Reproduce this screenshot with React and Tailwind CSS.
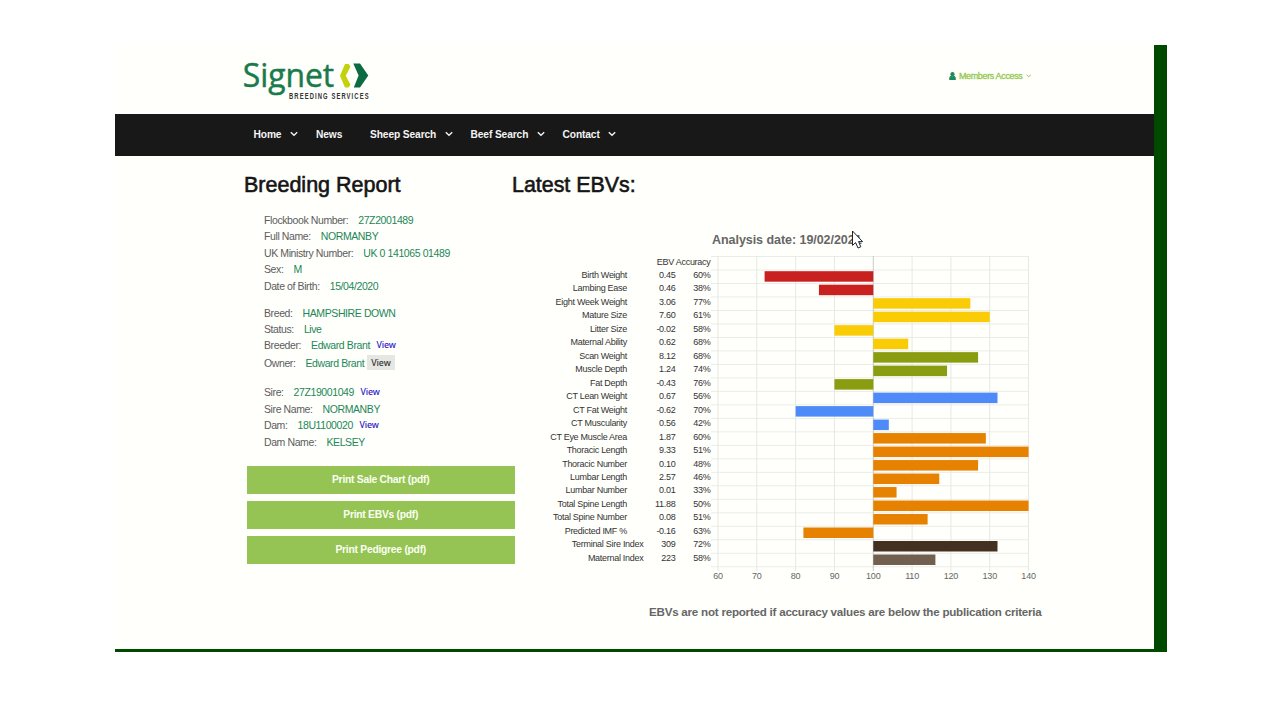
import React from "react";

const nav = [
  { label: "Home", cls: "ml-[138.5px] w-[62.5px]", arrow: true },
  { label: "News", cls: "w-[54px]", arrow: false },
  { label: "Sheep Search", cls: "w-[100.5px]", arrow: true },
  { label: "Beef Search", cls: "w-[92px]", arrow: true },
  { label: "Contact", cls: "", arrow: true },
];

const details = [
  { label: "Flockbook Number:", value: "27Z2001489", h: "h-[16px]" },
  { label: "Full Name:", value: "NORMANBY", h: "h-[16.5px]" },
  { label: "UK Ministry Number:", value: "UK 0 141065 01489", h: "h-[16.5px]" },
  { label: "Sex:", value: "M", h: "h-[17px]" },
  { label: "Date of Birth:", value: "15/04/2020", h: "h-[26.5px]" },
  { label: "Breed:", value: "HAMPSHIRE DOWN", h: "h-[16px]" },
  { label: "Status:", value: "Live", h: "h-[16.5px]" },
  { label: "Breeder:", value: "Edward Brant", h: "h-[18px]", link: "view" },
  { label: "Owner:", value: "Edward Brant", h: "h-[28.5px]", link: "active" },
  { label: "Sire:", value: "27Z19001049", h: "h-[17.5px]", link: "view" },
  { label: "Sire Name:", value: "NORMANBY", h: "h-[16px]" },
  { label: "Dam:", value: "18U1100020", h: "h-[17px]", link: "view" },
  { label: "Dam Name:", value: "KELSEY", h: "h-[16px]" },
];

const RED = "#c92020";
const YEL = "#f9cc05";
const GRN = "#8a9c10";
const BLU = "#4f8af9";
const ORG = "#e78200";

const traits = [
  ["Birth Weight", "0.45", "60%", 72, RED],
  ["Lambing Ease", "0.46", "38%", 86, RED],
  ["Eight Week Weight", "3.06", "77%", 125, YEL],
  ["Mature Size", "7.60", "61%", 130, YEL],
  ["Litter Size", "-0.02", "58%", 90, YEL],
  ["Maternal Ability", "0.62", "68%", 109, YEL],
  ["Scan Weight", "8.12", "68%", 127, GRN],
  ["Muscle Depth", "1.24", "74%", 119, GRN],
  ["Fat Depth", "-0.43", "76%", 90, GRN],
  ["CT Lean Weight", "0.67", "56%", 132, BLU],
  ["CT Fat Weight", "-0.62", "70%", 80, BLU],
  ["CT Muscularity", "0.56", "42%", 104, BLU],
  ["CT Eye Muscle Area", "1.87", "60%", 129, ORG],
  ["Thoracic Length", "9.33", "51%", 140, ORG],
  ["Thoracic Number", "0.10", "48%", 127, ORG],
  ["Lumbar Length", "2.57", "46%", 117, ORG],
  ["Lumbar Number", "0.01", "33%", 106, ORG],
  ["Total Spine Length", "11.88", "50%", 140, ORG],
  ["Total Spine Number", "0.08", "51%", 114, ORG],
  ["Predicted IMF %", "-0.16", "63%", 82, ORG],
  ["Terminal Sire Index", "309", "72%", 132, "#443020"],
  ["Maternal Index", "223", "58%", 116, "#715f50"],
];

function Chevron({ className }) {
  return (
    <svg viewBox="0 0 8 6" className={className} fill="none" stroke="currentColor" strokeWidth="1.4">
      <path d="M0.8 1.2 L4 4.2 L7.2 1.2" />
    </svg>
  );
}

function Logo() {
  return (
    <svg width="134" height="46" viewBox="-4 -4 134 46" overflow="visible" className="block">
      <text x="-1.3" y="25.3" fontFamily="'Open Sans', sans-serif" fontSize="33.5" fill="#1a7a4c" stroke="#1a7a4c" strokeWidth="0.5" textLength="91.5" lengthAdjust="spacingAndGlyphs">
        Signet
      </text>
      <path d="M101 2 H104.5 L106.5 4.5 L101.8 13.7 L106.5 22.8 L104.5 25.5 H101 L96 13.7 Z" fill="#c3d20a" />
      <path d="M109.3 1.5 H116 L124.3 13.5 L116 25.5 H109.8 L114.6 13.5 Z" fill="#0d6b43" />
      <g transform="translate(45 37) scale(0.68 1)">
        <text x="0" y="0" fontFamily="'Liberation Sans', Arial, sans-serif" fontWeight="700" fontSize="8.6" fill="#333" textLength="117" lengthAdjust="spacing">
          BREEDING SERVICES
        </text>
      </g>
    </svg>
  );
}

const STEP = 3.882;
const ROW = 13.49;

function Plot() {
  const x = (v) => 7 + (v - 60) * STEP;
  return (
    <svg width="330" height="330" viewBox="0 0 330 330" className="block">
      {Array.from({ length: 24 }, (_, i) => (
        <line key={i} x1="0" x2="317.8" y1={0.5 + i * ROW} y2={0.5 + i * ROW} stroke="#ebebe7" />
      ))}
      {[60, 70, 80, 90, 100, 110, 120, 130, 140].map((v) => (
        <g key={v}>
          <line x1={x(v)} x2={x(v)} y1="0" y2="315" stroke={v === 100 ? "#c9c9c5" : "#e7e7e3"} />
          <text x={x(v)} y="323" textAnchor="middle" fontSize="9" letterSpacing="-0.2" fill="#666">
            {v}
          </text>
        </g>
      ))}
      {traits.map(([name, , , v, color], i) => (
        <rect key={name} x={Math.min(x(v), x(100))} y={15.2 + i * ROW} width={Math.abs(x(v) - x(100))} height="10.5" fill={color} />
      ))}
    </svg>
  );
}

function DetailRow({ row }) {
  return (
    <div className={`flex items-start leading-4 ${row.h}`}>
      <span className="text-[#5c5c5c]">{row.label}</span>
      <span className="ml-[10px] text-[#1d8757]">{row.value}</span>
      {row.link === "view" && (
        <a className="ml-[6.5px] font-['Noto_Sans'] text-[8.8px] font-medium tracking-[-0.1px] text-[#2a20c8]">View</a>
      )}
      {row.link === "active" && (
        <a className="ml-[3px] h-[15px] bg-[#e6e6e3] px-[4px] font-['Noto_Sans'] text-[8.8px] font-medium leading-[16px] tracking-[-0.1px] text-[#333]">
          View
        </a>
      )}
    </div>
  );
}

export default function App() {
  return (
    <div className="h-[720px] w-[1280px] overflow-hidden bg-white pl-[115px] pt-[45px] font-['Liberation_Sans',Arial,sans-serif]">
      <div className="flex h-[607px] w-[1051.5px] flex-col border-b-[3px] border-r-[13px] border-[#004a00] bg-[#fffffc]">
        <header className="flex h-[69px] shrink-0 items-start justify-between">
          <div className="pl-[125px] pt-[13px]">
            <Logo />
          </div>
          <div className="mr-[122px] mt-[25px] flex items-center">
            <svg width="7" height="8" viewBox="0 0 7 8" className="mr-[3px]" fill="#1f8a5b">
              <circle cx="3.5" cy="2.2" r="2.1" />
              <path d="M0.2 8 V6 Q0.4 4 2 3.8 Q3.5 4.6 5 3.8 Q6.6 4 6.8 6 V8 Z" />
            </svg>
            <span className="text-[9px] leading-3 tracking-[-0.35px] text-[#94c84c] [-webkit-text-stroke:0.3px_#94c84c]">Members Access</span>
            <Chevron className="ml-[3.5px] h-[4px] w-[5.5px] text-[#8cc63f]" />
          </div>
        </header>

        <nav className="flex h-[42px] shrink-0 items-center bg-[#181818] text-[10.2px] font-bold tracking-[-0.1px] text-[#f4f4f4]">
          {nav.map((n) => (
            <div key={n.label} className={`flex items-center ${n.cls}`}>
              <span className="whitespace-nowrap">{n.label}</span>
              {n.arrow && <Chevron className="mb-[2px] ml-[8.5px] h-[6px] w-[8px]" />}
            </div>
          ))}
        </nav>

        <main className="flex">
          <section className="w-[397px] shrink-0 pl-[129px] pt-[16px]">
            <h1 className="h-[40px] text-[21.5px] leading-[26px] text-[#151515] [-webkit-text-stroke:0.6px_#151515]">Breeding Report</h1>
            <div className="pl-[20px] text-[10.5px] tracking-[-0.4px]">
              {details.map((row) => (
                <DetailRow key={row.label} row={row} />
              ))}
            </div>
            <div className="ml-[3px] mt-[16px] flex w-[267.5px] flex-col text-center text-[10.3px] font-bold tracking-[-0.25px] text-[#fbfff2]">
              <button className="mb-[7px] h-[28px] bg-[#95c455]">Print Sale Chart (pdf)</button>
              <button className="mb-[6.5px] h-[28px] bg-[#95c455]">Print EBVs (pdf)</button>
              <button className="h-[28px] bg-[#95c455]">Print Pedigree (pdf)</button>
            </div>
          </section>

          <section className="w-[640px] shrink-0 pt-[16px]">
            <h2 className="h-[26px] text-[21.4px] leading-[26px] text-[#151515] [-webkit-text-stroke:0.6px_#151515]">Latest EBVs:</h2>
            <h3 className="relative ml-[200px] mt-[34px] h-[16px] w-fit text-[12.5px] font-bold leading-4 tracking-[-0.05px] text-[#666]">
              Analysis date: 19/02/2021
              <svg width="13" height="20" viewBox="0 0 13 20" className="absolute left-[139px] top-[-2px]">
                <path d="M1.5 1 V15.4 L4.6 12.6 L7 18 L9.8 16.8 L7.6 11.6 H11.6 Z" fill="#fff" stroke="#222" strokeWidth="1" />
              </svg>
            </h3>
            <div className="mt-[8px] flex">
              <div className="w-[198.5px] text-right text-[9px] tracking-[-0.28px] text-[#333]">
                <div className="h-[12.5px] leading-[13px]">EBV Accuracy</div>
                {traits.map(([name, ebv, acc], i) => (
                  <div key={name} className="flex h-[13.49px] items-center whitespace-nowrap leading-[13px]">
                    <span className={i < 20 ? "w-[115px]" : "w-[131.5px]"}>{name}</span>
                    <span className={i < 20 ? "w-[48.5px]" : "w-[32px]"}>{ebv}</span>
                    <span className="w-[35px]">{acc}</span>
                  </div>
                ))}
              </div>
              <Plot />
            </div>
            <p className="ml-[137px] mt-[18px] whitespace-nowrap text-[11.6px] font-bold leading-4 tracking-[-0.23px] text-[#666]">
              EBVs are not reported if accuracy values are below the publication criteria
            </p>
          </section>
        </main>
      </div>
    </div>
  );
}
